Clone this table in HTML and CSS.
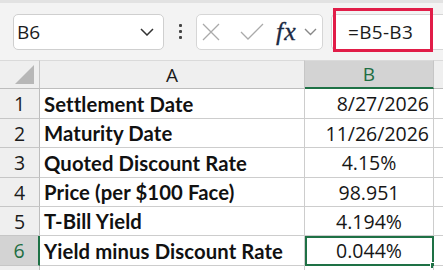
FILE: index.html
```html
<!DOCTYPE html>
<html>
<head>
<meta charset="utf-8">
<link rel="stylesheet" href="styles.css">
</head>
<body>
<div class="app">
  <div class="toolbar">
    <div class="namebox">
      <span class="name">B6</span>
      <svg class="chev" width="14" height="8" viewBox="0 0 14 8"><path d="M1 1 L7 7 L13 1" fill="none" stroke="#333" stroke-width="1.5"/></svg>
    </div>
    <div class="dots"><span></span><span></span><span></span></div>
    <div class="fxbox">
      <svg class="ico" width="20" height="20" viewBox="0 0 20 20"><path d="M2 2 L18 18 M18 2 L2 18" stroke="#aaa" stroke-width="1.3" fill="none"/></svg>
      <svg class="ico" width="24" height="18" viewBox="0 0 24 18"><path d="M1 9 L8 16 L23 1" stroke="#aaa" stroke-width="1.3" fill="none"/></svg>
      <span class="fx">fx</span>
      <svg class="chev2" width="13" height="8" viewBox="0 0 13 8"><path d="M1 1 L6.5 6.5 L12 1" fill="none" stroke="#888" stroke-width="1.4"/></svg>
    </div>
    <div class="input">
      <span class="formula">=B5-B3</span>
    </div>
    <div class="highlight"></div>
  </div>
  <div class="grid">
    <div class="corner"><div class="tri"></div></div>
    <div class="colhead">A</div>
    <div class="colhead sel">B</div>
    <div class="colhead rest"></div>

    <div class="rowhead">1</div>
    <div class="cell lbl">Settlement Date</div>
    <div class="cell num r">8/27/2026</div>
    <div class="cell rest"></div>

    <div class="rowhead">2</div>
    <div class="cell lbl">Maturity Date</div>
    <div class="cell num r">11/26/2026</div>
    <div class="cell rest"></div>

    <div class="rowhead">3</div>
    <div class="cell lbl">Quoted Discount Rate</div>
    <div class="cell num c">4.15%</div>
    <div class="cell rest"></div>

    <div class="rowhead">4</div>
    <div class="cell lbl">Price (per $100 Face)</div>
    <div class="cell num c">98.951</div>
    <div class="cell rest"></div>

    <div class="rowhead">5</div>
    <div class="cell lbl">T-Bill Yield</div>
    <div class="cell num c">4.194%</div>
    <div class="cell rest"></div>

    <div class="rowhead selrow">6</div>
    <div class="cell lbl">Yield minus Discount Rate</div>
    <div class="cell num c active">0.044%<span class="handle"></span></div>
    <div class="cell rest"></div>

    <div class="rowhead"></div>
    <div class="cell"></div>
    <div class="cell"></div>
    <div class="cell rest"></div>
  </div>
</div>
</body>
</html>
```
FILE: styles.css
```css
* { box-sizing: border-box; }
html, body { margin: 0; padding: 0; }
body {
  width: 443px;
  height: 270px;
  overflow: hidden;
  background: #f3f3f3;
  font-family: "Lato", "Liberation Sans", sans-serif;
}
.app { position: relative; width: 443px; height: 270px; }
.toolbar {
  position: relative;
  height: 60px;
  display: flex;
  align-items: center;
  padding-left: 13px;
  background: #f3f3f3;
  border-top: 3px solid #e2e2e2;
}
.namebox {
  width: 151px;
  height: 36px;
  background: #fff;
  border: 1px solid #cfcfcf;
  border-radius: 5px;
  display: flex;
  align-items: center;
  justify-content: space-between;
  padding: 0 9px 0 3px;
}
.name {
  font-family: "Open Sans", "Noto Sans", sans-serif;
  font-size: 19px;
  color: #1b1b1b;
}
.dots {
  width: 32px;
  display: flex;
  flex-direction: column;
  align-items: center;
  gap: 3px;
}
.dots span {
  width: 3px;
  height: 3px;
  background: #444;
  border-radius: 1px;
}
.fxbox {
  width: 127px;
  height: 36px;
  background: #fff;
  border: 1px solid #d6d6d6;
  border-radius: 5px;
  display: flex;
  align-items: center;
  padding-left: 4px;
}
.fxbox .ico:first-child { margin-right: 19px; }
.fx {
  font-family: "Liberation Serif", serif;
  font-style: italic;
  font-size: 26px;
  color: #1b2a44;
  margin-left: 12px;
  margin-right: 7px;
  line-height: 1;
  letter-spacing: 1px;
  -webkit-text-stroke: 0.3px #1b2a44;
}
.input {
  margin-left: 8px;
  flex: 1;
  height: 36px;
  background: #fff;
  border: 1px solid #d6d6d6;
  border-right: none;
  border-radius: 5px 0 0 5px;
  display: flex;
  align-items: center;
  padding-left: 16px;
}
.formula {
  font-family: "Open Sans", "Noto Sans", sans-serif;
  font-size: 19px;
  color: #1b1b1b;
  letter-spacing: 0.3px;
}
.highlight {
  position: absolute;
  left: 333px;
  top: 5px;
  width: 100px;
  height: 44px;
  border: 3px solid #e11d48;
}
.grid {
  display: grid;
  grid-template-columns: 40px 265px 129px 1fr;
  grid-template-rows: 29px 30px 29px 30px 29px 29px 30px 10px;
  background: #fff;
}
.corner {
  background: #efefef;
  border-right: 1px solid #c6c6c6;
  border-bottom: 1px solid #bdbdbd;
  border-top: 1px solid #dadada;
  position: relative;
}
.tri {
  position: absolute;
  right: 5px;
  bottom: 4px;
  width: 0;
  height: 0;
  border-left: 19px solid transparent;
  border-bottom: 19px solid #b7b7b7;
}
.colhead {
  background: #efefef;
  border-right: 1px solid #c6c6c6;
  border-bottom: 1px solid #bdbdbd;
  border-top: 1px solid #dadada;
  display: flex;
  align-items: center;
  justify-content: center;
  font-family: "Open Sans", "Noto Sans", sans-serif;
  font-size: 19px;
  color: #1b1b1b;
}
.colhead.sel {
  background: #d3d3d3;
  color: #1e6e42;
  border-bottom: 2px solid #1e7145;
}
.colhead.rest { border-right: none; }
.rowhead {
  background: #efefef;
  border-right: 1px solid #bdbdbd;
  border-bottom: 1px solid #c6c6c6;
  display: flex;
  align-items: center;
  justify-content: center;
  font-family: "Open Sans", "Noto Sans", sans-serif;
  font-size: 19.5px;
  color: #1b1b1b;
}
.rowhead.selrow {
  background: #d3d3d3;
  color: #1e6e42;
  border-right: 2px solid #1e7145;
}
.cell {
  border-right: 1px solid #cdcdcd;
  border-bottom: 1px solid #cdcdcd;
  display: flex;
  align-items: center;
  font-size: 20.3px;
  color: #111;
  padding: 0 4px;
  white-space: nowrap;
  position: relative;
}
.cell.rest { border-right: none; background: #fff; }
.cell.lbl { font-weight: 700; letter-spacing: 0.1px; }
.cell.num {
  font-family: "Open Sans", "Noto Sans", sans-serif;
  font-size: 19.5px;
  color: #161616;
}
.cell.r { justify-content: flex-end; }
.cell.c { justify-content: center; }
.cell.active {
  outline: 2px solid #1e7145;
  outline-offset: -2px;
}
.handle {
  position: absolute;
  right: -4px;
  bottom: -4px;
  width: 7px;
  height: 7px;
  background: #1e7145;
  border: 1px solid #fff;
}
```
